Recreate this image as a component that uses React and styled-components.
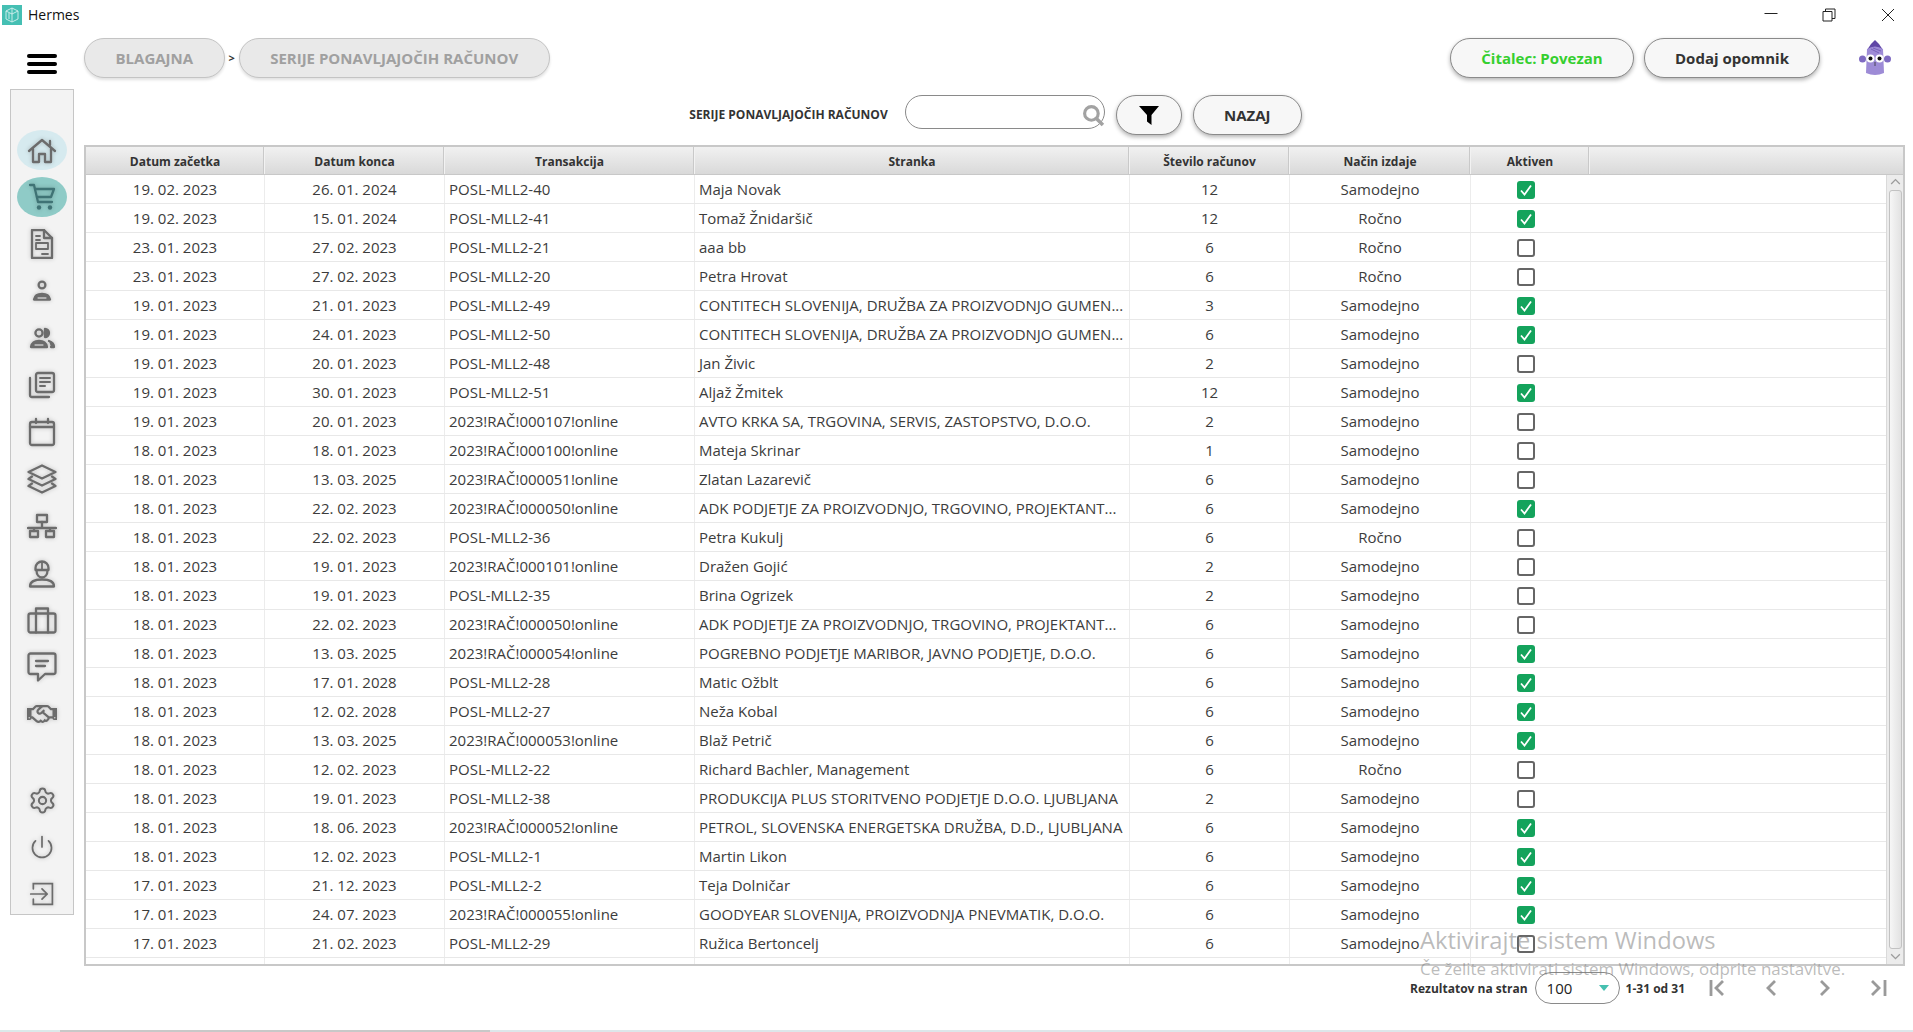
import React from "react";
import styled, { createGlobalStyle } from "styled-components";
import { FaRegHandshake } from "react-icons/fa";
import { Settings } from "lucide-react";

const GlobalStyle = createGlobalStyle`
  html, body { margin: 0; padding: 0; background: #fff; overflow: hidden; }
  body { font-family: "Open Sans", "Noto Sans", sans-serif; color: #333; }
`;

const rows = [
  ["19. 02. 2023", "26. 01. 2024", "POSL-MLL2-40", "Maja Novak", 12, "Samodejno", true],
  ["19. 02. 2023", "15. 01. 2024", "POSL-MLL2-41", "Tomaž Žnidaršič", 12, "Ročno", true],
  ["23. 01. 2023", "27. 02. 2023", "POSL-MLL2-21", "aaa bb", 6, "Ročno", false],
  ["23. 01. 2023", "27. 02. 2023", "POSL-MLL2-20", "Petra Hrovat", 6, "Ročno", false],
  ["19. 01. 2023", "21. 01. 2023", "POSL-MLL2-49", "CONTITECH SLOVENIJA, DRUŽBA ZA PROIZVODNJO GUMEN...", 3, "Samodejno", true],
  ["19. 01. 2023", "24. 01. 2023", "POSL-MLL2-50", "CONTITECH SLOVENIJA, DRUŽBA ZA PROIZVODNJO GUMEN...", 6, "Samodejno", true],
  ["19. 01. 2023", "20. 01. 2023", "POSL-MLL2-48", "Jan Živic", 2, "Samodejno", false],
  ["19. 01. 2023", "30. 01. 2023", "POSL-MLL2-51", "Aljaž Žmitek", 12, "Samodejno", true],
  ["19. 01. 2023", "20. 01. 2023", "2023!RAČ!000107!online", "AVTO KRKA SA, TRGOVINA, SERVIS, ZASTOPSTVO, D.O.O.", 2, "Samodejno", false],
  ["18. 01. 2023", "18. 01. 2023", "2023!RAČ!000100!online", "Mateja Skrinar", 1, "Samodejno", false],
  ["18. 01. 2023", "13. 03. 2025", "2023!RAČ!000051!online", "Zlatan Lazarevič", 6, "Samodejno", false],
  ["18. 01. 2023", "22. 02. 2023", "2023!RAČ!000050!online", "ADK PODJETJE ZA PROIZVODNJO, TRGOVINO, PROJEKTANT...", 6, "Samodejno", true],
  ["18. 01. 2023", "22. 02. 2023", "POSL-MLL2-36", "Petra Kukulj", 6, "Ročno", false],
  ["18. 01. 2023", "19. 01. 2023", "2023!RAČ!000101!online", "Dražen Gojić", 2, "Samodejno", false],
  ["18. 01. 2023", "19. 01. 2023", "POSL-MLL2-35", "Brina Ogrizek", 2, "Samodejno", false],
  ["18. 01. 2023", "22. 02. 2023", "2023!RAČ!000050!online", "ADK PODJETJE ZA PROIZVODNJO, TRGOVINO, PROJEKTANT...", 6, "Samodejno", false],
  ["18. 01. 2023", "13. 03. 2025", "2023!RAČ!000054!online", "POGREBNO PODJETJE MARIBOR, JAVNO PODJETJE, D.O.O.", 6, "Samodejno", true],
  ["18. 01. 2023", "17. 01. 2028", "POSL-MLL2-28", "Matic Ožblt", 6, "Samodejno", true],
  ["18. 01. 2023", "12. 02. 2028", "POSL-MLL2-27", "Neža Kobal", 6, "Samodejno", true],
  ["18. 01. 2023", "13. 03. 2025", "2023!RAČ!000053!online", "Blaž Petrič", 6, "Samodejno", true],
  ["18. 01. 2023", "12. 02. 2023", "POSL-MLL2-22", "Richard Bachler, Management", 6, "Ročno", false],
  ["18. 01. 2023", "19. 01. 2023", "POSL-MLL2-38", "PRODUKCIJA PLUS STORITVENO PODJETJE D.O.O. LJUBLJANA", 2, "Samodejno", false],
  ["18. 01. 2023", "18. 06. 2023", "2023!RAČ!000052!online", "PETROL, SLOVENSKA ENERGETSKA DRUŽBA, D.D., LJUBLJANA", 6, "Samodejno", true],
  ["18. 01. 2023", "12. 02. 2023", "POSL-MLL2-1", "Martin Likon", 6, "Samodejno", true],
  ["17. 01. 2023", "21. 12. 2023", "POSL-MLL2-2", "Teja Dolničar", 6, "Samodejno", true],
  ["17. 01. 2023", "24. 07. 2023", "2023!RAČ!000055!online", "GOODYEAR SLOVENIJA, PROIZVODNJA PNEVMATIK, D.O.O.", 6, "Samodejno", true],
  ["17. 01. 2023", "21. 02. 2023", "POSL-MLL2-29", "Ružica Bertoncelj", 6, "Samodejno", false],
  // next row only shows the top of its checkbox above the table edge
  ["", "", "", "", "", "", true],
];

const columns = "179px 180px 250px 435px 160px 181px 119px 1fr";

const Page = styled.div`
  width: 1913px;
  height: 1032px;
  display: flex;
  flex-direction: column;
  position: relative;
  overflow: hidden;
`;

const TitleBar = styled.div`
  height: 29px;
  display: flex;
  align-items: center;
  padding: 0 3px 0 2px;
`;

const AppName = styled.span`
  margin-left: 6px;
  font-size: 14px;
  color: #111;
  flex: 1;
`;

const WinButton = styled.div`
  width: 45px;
  margin-left: 13.5px;
  display: flex;
  justify-content: center;
`;

const Header = styled.div`
  height: 60px;
  box-sizing: border-box;
  display: flex;
  align-items: flex-start;
  padding: 9px 22px 0 27px;
`;

const Burger = styled.div`
  width: 30px;
  margin-top: 16px;
  margin-right: 27px;
  display: flex;
  flex-direction: column;
  gap: 4px;
`;

const BurgerBar = styled.span`
  height: 4px;
  background: #000;
  border-radius: 2px;
`;

const Crumb = styled.div`
  height: 40px;
  box-sizing: border-box;
  padding: 0 30.5px;
  display: flex;
  align-items: center;
  border-radius: 20px;
  border: 1.5px solid #c4c4c4;
  background: #e9e9e9;
  box-shadow: 0 2px 3px rgba(0, 0, 0, 0.12);
  color: #a0a0a0;
  font-size: 15px;
  font-weight: 700;
`;

const CrumbArrow = styled.span`
  width: 14px;
  height: 40px;
  line-height: 40px;
  text-align: center;
  font-size: 11px;
  font-weight: 700;
  color: #333;
`;

const HeaderRight = styled.div`
  margin-left: auto;
  display: flex;
  align-items: flex-start;
  gap: 10px;
`;

const PillButton = styled.button`
  height: 40px;
  box-sizing: border-box;
  width: ${(p) => p.$width}px;
  padding: 0;
  border-radius: 20px;
  border: 1.5px solid #8a8a8a;
  background: #f7f7f7;
  box-shadow: 0 2px 4px rgba(0, 0, 0, 0.3);
  color: ${(p) => p.$color || "#333"};
  font-family: inherit;
  font-size: 15px;
  font-weight: 700;
  display: flex;
  align-items: center;
  justify-content: center;
`;

const Avatar = styled.div`
  margin-left: 29px;
  margin-top: 2px;
  height: 36px;
`;

const Main = styled.div`
  flex: 1;
  display: flex;
  align-items: flex-start;
  padding-left: 10px;
`;

const Sidebar = styled.nav`
  width: 64px;
  height: 826px;
  box-sizing: border-box;
  padding-top: 40px;
  border: 1px solid #c6c6c6;
  background: #f3f3f3;
  display: flex;
  flex-direction: column;
  align-items: center;
`;

const NavGroup = styled.div`
  display: flex;
  flex-direction: column;
  gap: 7px;
  margin-top: ${(p) => (p.$bottom ? "auto" : "0")};
`;

const NavItem = styled.div`
  width: 50px;
  height: 40px;
  border-radius: 50%;
  display: flex;
  align-items: center;
  justify-content: center;
  background: ${(p) => (p.$state === "active" ? "#8fcbc7" : p.$state === "home" ? "#d6eaef" : "transparent")};
  color: ${(p) => (p.$state === "active" ? "#3f7375" : "#6c6c6c")};
  svg {
    filter: drop-shadow(0 0 2px rgba(0, 0, 0, 0.22));
  }
`;

const Content = styled.div`
  margin-left: 10px;
  width: 1821px;
  display: flex;
  flex-direction: column;
  padding-top: 6px;
`;

const Toolbar = styled.div`
  height: 40px;
  padding-left: 2px;
  display: flex;
  justify-content: center;
  align-items: flex-start;
  gap: 11px;
  margin-bottom: 10px;
`;

const ToolbarLabel = styled.span`
  line-height: 40px;
  margin-right: 6px;
  font-size: 12px;
  font-weight: 700;
  color: #333;
`;

const SearchBox = styled.div`
  position: relative;
  width: 200px;
  height: 34px;
`;

const SearchInput = styled.input`
  width: 100%;
  height: 100%;
  box-sizing: border-box;
  border-radius: 17px;
  border: 1px solid #8a8a8a;
  background: #fff;
  outline: none;
`;

const SearchIcon = styled.svg`
  position: absolute;
  right: 0;
  top: 9px;
`;

const Table = styled.div`
  height: 821px;
  box-sizing: border-box;
  border: 2px solid #c8c8c8;
  display: flex;
  flex-direction: column;
`;

const HeadRow = styled.div`
  height: 28px;
  flex: none;
  box-sizing: border-box;
  display: grid;
  grid-template-columns: ${columns};
  background: linear-gradient(#f1f1f1, #d9d9d9);
  border-bottom: 1px solid #c8c8c8;
`;

const HeadCell = styled.div`
  padding-top: 2px;
  border-right: 1px solid #f2f2f2;
  box-shadow: inset -1px 0 0 #c9c9c9;
  display: flex;
  align-items: center;
  justify-content: center;
  font-size: 12px;
  font-weight: 700;
  color: #333;
  &:last-child {
    border: 0;
    box-shadow: none;
  }
`;

const TableBody = styled.div`
  flex: 1;
  min-height: 0;
  display: flex;
  position: relative;
`;

const RowList = styled.div`
  flex: 1;
  overflow: hidden;
`;

const Row = styled.div`
  height: 29px;
  box-sizing: border-box;
  display: grid;
  grid-template-columns: ${columns};
  border-bottom: 1px solid #e8e8e8;
`;

const Cell = styled.div`
  display: flex;
  align-items: center;
  justify-content: ${(p) => (p.$left ? "flex-start" : "center")};
  padding-left: ${(p) => (p.$left ? "4px" : "0")};
  border-right: ${(p) => (p.$plain ? "0" : "1px solid #ececec")};
  font-size: 15px;
  color: #3c3c3c;
  white-space: nowrap;
  overflow: hidden;
`;

const CheckCell = styled(Cell)`
  padding-right: 9px;
  padding-top: 1px;
`;

const Check = styled.span`
  width: 18px;
  height: 18px;
  box-sizing: border-box;
  border-radius: 3px;
  display: flex;
  align-items: center;
  justify-content: center;
  background: ${(p) => (p.$on ? "#14a35c" : "#fff")};
  border: ${(p) => (p.$on ? "0" : "2.5px solid #666")};
`;

const Scrollbar = styled.div`
  width: 16px;
  flex: none;
  background: #ececec;
  border-left: 1px solid #dadada;
  display: flex;
  flex-direction: column;
  align-items: center;
`;

const ScrollArrow = styled.div`
  height: 15px;
  flex: none;
  display: flex;
  align-items: center;
  justify-content: center;
`;

const ScrollThumb = styled.div`
  flex: 1;
  width: 13px;
  box-sizing: border-box;
  border: 1px solid #c2c2c2;
  border-radius: 3px;
  background: linear-gradient(90deg, #f6f6f6, #e2e2e2);
`;

const Pager = styled.div`
  height: 32px;
  margin-top: 6px;
  display: flex;
  align-items: center;
  justify-content: flex-end;
`;

const PagerText = styled.span`
  font-size: 12px;
  font-weight: 700;
  color: #333;
`;

const PageSize = styled.div`
  width: 85px;
  height: 32px;
  box-sizing: border-box;
  margin: 0 6px 0 7px;
  padding: 0 10px 0 11px;
  border: 1px solid #8a8a8a;
  border-radius: 16px;
  display: flex;
  align-items: center;
  justify-content: space-between;
  font-size: 15px;
  color: #222;
`;

const Caret = styled.span`
  width: 0;
  height: 0;
  border-left: 5px solid transparent;
  border-right: 5px solid transparent;
  border-top: 6px solid #46c0b0;
`;

const PageButton = styled.div`
  width: 54px;
  display: flex;
  justify-content: center;
`;

const PageButtons = styled.div`
  margin-left: 4px;
  display: flex;
`;

const Watermark = styled.div`
  position: absolute;
  left: 1420px;
  top: 924px;
  pointer-events: none;
  color: rgba(120, 120, 120, 0.5);
  white-space: nowrap;
`;

const WatermarkTitle = styled.div`
  font-size: 23.7px;
  line-height: 32px;
`;

const WatermarkText = styled.div`
  font-size: 16.9px;
  line-height: 26px;
`;

const BottomEdge = styled.div`
  position: absolute;
  left: 0;
  right: 0;
  bottom: 0;
  height: 2px;
  display: flex;
`;

const EdgePart = styled.span`
  flex: ${(p) => (p.$wide ? "1" : "none")};
  width: ${(p) => p.$width || 0}px;
  background: ${(p) => p.$color};
`;

// all nav drawings share the same 30 unit box
const Ico = ({ children, w = 30, h = 30 }) => (
  <svg width={w} height={h} viewBox="0 0 30 30" fill="none" stroke="currentColor" strokeWidth="2.3" strokeLinejoin="round" strokeLinecap="round">
    {children}
  </svg>
);

const HomeIcon = () => (
  <Ico>
    <path d="M2 16 L15 5 L28 16" />
    <path d="M6 14 V27 H12 V19 H18 V27 H24 V14" />
    <path d="M23 10 V6" />
  </Ico>
);
const CartIcon = () => (
  <Ico>
    <path d="M3 3 H7 L11 20 H25" />
    <path d="M8 7 H27 L24 15 H10" />
    <circle cx="12" cy="25.5" r="2.2" fill="currentColor" stroke="none" />
    <circle cx="23" cy="25.5" r="2.2" fill="currentColor" stroke="none" />
  </Ico>
);
const DocIcon = () => (
  <Ico>
    <path d="M5 1 H17 L25 9 V29 H5 Z" />
    <path d="M17 1 V9 H25" />
    <path d="M9 7 H13 M9 11 H13" strokeWidth="1.8" />
    <rect x="9" y="14" width="12" height="6" strokeWidth="1.8" />
    <path d="M15 25 H21" strokeWidth="1.8" />
  </Ico>
);
const PersonIcon = () => (
  <Ico>
    <circle cx="15" cy="9" r="3.4" />
    <path d="M7 23.5 C8 19 11 18 15 18 S22 19 23 23.5 Z" fill="currentColor" />
    <path d="M11 22 H19" stroke="#f3f3f3" strokeWidth="1" />
  </Ico>
);
const PeopleIcon = () => (
  <Ico>
    <circle cx="12" cy="10" r="3.6" />
    <path d="M4 24 C5 19 8 18 12 18 S19 19 20 24 Z" fill="currentColor" />
    <path d="M8 22 H16" stroke="#f3f3f3" strokeWidth="1" />
    <path d="M18 6 A4 4 0 0 1 18 14 Z" fill="currentColor" />
    <path d="M22 18 C25 19 27 21 27 24 H24" fill="currentColor" />
  </Ico>
);
const NewsIcon = () => (
  <Ico>
    <rect x="9" y="3" width="18" height="19" rx="2" />
    <path d="M13 8 H23 M13 12 H23 M13 16 H18" strokeWidth="2" />
    <path d="M3 8 V25 A2 2 0 0 0 5 27 H22" />
  </Ico>
);
const CalendarIcon = () => (
  <Ico>
    <rect x="3" y="5" width="24" height="23" rx="2" />
    <path d="M3 10 H27" />
    <path d="M9 2 V6 M21 2 V6" />
  </Ico>
);
const LayersIcon = () => (
  <Ico>
    <path d="M15 1.5 L28.5 8 L15 14.5 L1.5 8 Z" />
    <path d="M5 12.5 L1.5 15 L15 21.5 L28.5 15 L25 12.5" />
    <path d="M5 19.5 L1.5 22 L15 28.5 L28.5 22 L25 19.5" />
  </Ico>
);
const NetworkIcon = () => (
  <Ico>
    <rect x="10" y="4" width="10" height="7" />
    <path d="M15 11 V17 M1 17 H29 M7 17 V20 M23 17 V20" />
    <rect x="3" y="20" width="8" height="6" />
    <rect x="19" y="20" width="8" height="6" />
  </Ico>
);
const WorkerIcon = () => (
  <Ico>
    <path d="M8.5 10 A6.5 6.5 0 0 1 21.5 10 V12 H8.5 Z" />
    <path d="M15 4 V12" strokeWidth="1.8" />
    <path d="M9.5 12 C9.5 17 12 19.5 15 19.5 S20.5 17 20.5 12" />
    <path d="M3 28.5 C3 23.5 8 21.5 15 21.5 S27 23.5 27 28.5 Z" />
  </Ico>
);
const CaseIcon = () => (
  <Ico>
    <rect x="1.5" y="8.5" width="27" height="19" rx="2" />
    <path d="M9 8.5 V3.5 H21 V8.5 M9 8.5 V27.5 M21 8.5 V27.5" />
  </Ico>
);
const ChatIcon = () => (
  <Ico>
    <path d="M3.5 1.5 H26.5 A2 2 0 0 1 28.5 3.5 V20 A2 2 0 0 1 26.5 22 H18 L11 28.5 V22 H3.5 A2 2 0 0 1 1.5 20 V3.5 A2 2 0 0 1 3.5 1.5 Z" />
    <path d="M9 9 H21 M9 14 H18" />
  </Ico>
);
const PowerIcon = () => (
  <Ico w={26} h={26}>
    <path d="M15 3 V15" strokeWidth="2" />
    <path d="M7.5 8 A11 11 0 1 0 22.5 8" strokeWidth="2" />
  </Ico>
);
const ExitIcon = () => (
  <Ico w={26} h={26}>
    <path d="M5 9 V3 H27 V27 H5 V21" strokeWidth="2" strokeLinejoin="miter" />
    <path d="M2 15 H21 M15 9 L21 15 L15 21" strokeWidth="2" />
  </Ico>
);

const navTop = [
  [<HomeIcon />, "home"],
  [<CartIcon />, "active"],
  [<DocIcon />],
  [<PersonIcon />],
  [<PeopleIcon />],
  [<NewsIcon />],
  [<CalendarIcon />],
  [<LayersIcon />],
  [<NetworkIcon />],
  [<WorkerIcon />],
  [<CaseIcon />],
  [<ChatIcon />],
  [<FaRegHandshake size={30} />],
];

const navBottom = [<Settings size={29} strokeWidth={1.7} />, <PowerIcon />, <ExitIcon />];

const Logo = () => (
  <svg width="20" height="20" viewBox="0 0 20 20">
    <rect width="20" height="20" fill="#45bfb3" />
    <path d="M10 3 L16 6 V14 L10 17 L4 14 V6 Z M10 3 V17 M4 6 L10 9 L16 6 M7 8 V14" fill="none" stroke="#d5f1ee" strokeWidth="0.9" />
  </svg>
);

const Creature = () => (
  <svg width="32" height="36" viewBox="0 0 32 36">
    <path d="M16 0 L20 4 L24 10 L8 10 L12 4 Z" fill="#5f46a6" />
    <circle cx="3.5" cy="19" r="3.5" fill="#7f6bc2" />
    <circle cx="28.5" cy="19" r="3.5" fill="#7f6bc2" />
    <path d="M8 9 Q16 4 24 9 L25 33 Q16 37 7 33 Z" fill="#9d8bd6" />
    <path d="M12 9 L20 13 M14 8 L22 11" stroke="#6e58b4" strokeWidth="0.8" />
    <circle cx="11.5" cy="18.5" r="4" fill="#fff" />
    <circle cx="20.5" cy="18.5" r="4" fill="#fff" />
    <circle cx="11.5" cy="18.5" r="2" fill="#111" />
    <circle cx="20.5" cy="18.5" r="2" fill="#111" />
    <path d="M16 22 V26" stroke="#333" strokeWidth="0.8" />
  </svg>
);

const WinIcon = ({ children }) => (
  <svg width="14" height="14" viewBox="0 0 14 14" fill="none" stroke="#222" strokeWidth="1">
    {children}
  </svg>
);

const Chevron = ({ d, stroke = "#9a9a9a", w = 18, h = 18, sw = 2.8 }) => (
  <svg width={w} height={h} viewBox="0 0 18 18" fill="none" stroke={stroke} strokeWidth={sw}>
    <path d={d} />
  </svg>
);

const App = () => {
  return (
    <Page>
      <GlobalStyle />
      <TitleBar>
        <Logo />
        <AppName>Hermes</AppName>
        <WinButton>
          <WinIcon>
            <path d="M0.5 5.5 H13.5" />
          </WinIcon>
        </WinButton>
        <WinButton>
          <WinIcon>
            <path d="M1 3.5 H10 V13 H1 Z M3.5 3.5 V1 H13 V10.5 H10" />
          </WinIcon>
        </WinButton>
        <WinButton>
          <WinIcon>
            <path d="M1 1 L13 13 M13 1 L1 13" />
          </WinIcon>
        </WinButton>
      </TitleBar>

      <Header>
        <Burger>
          <BurgerBar />
          <BurgerBar />
          <BurgerBar />
        </Burger>
        <Crumb>BLAGAJNA</Crumb>
        <CrumbArrow>&gt;</CrumbArrow>
        <Crumb>SERIJE PONAVLJAJOČIH RAČUNOV</Crumb>
        <HeaderRight>
          <PillButton $width={184} $color="#35cf2f">Čitalec: Povezan</PillButton>
          <PillButton $width={176}>Dodaj opomnik</PillButton>
          <Avatar>
            <Creature />
          </Avatar>
        </HeaderRight>
      </Header>

      <Main>
        <Sidebar>
          <NavGroup>
            {navTop.map(([icon, state], i) => (
              <NavItem key={i} $state={state}>
                {icon}
              </NavItem>
            ))}
          </NavGroup>
          <NavGroup $bottom>
            {navBottom.map((icon, i) => (
              <NavItem key={i}>{icon}</NavItem>
            ))}
          </NavGroup>
        </Sidebar>

        <Content>
          <Toolbar>
            <ToolbarLabel>SERIJE PONAVLJAJOČIH RAČUNOV</ToolbarLabel>
            <SearchBox>
              <SearchInput />
              <SearchIcon width="23" height="23" viewBox="0 0 22 22" fill="none" stroke="#a2a2a2">
                <circle cx="9" cy="9" r="6.5" strokeWidth="3" />
                <path d="M14 14 L20 20" strokeWidth="3.4" />
              </SearchIcon>
            </SearchBox>
            <PillButton $width={66}>
              <svg width="20" height="20" viewBox="0 0 20 20" fill="#000">
                <path d="M0 1 H20 L12.5 10 V20 L8 16.5 V10 Z" />
              </svg>
            </PillButton>
            <PillButton $width={109}>NAZAJ</PillButton>
          </Toolbar>

          <Table>
            <HeadRow>
              <HeadCell>Datum začetka</HeadCell>
              <HeadCell>Datum konca</HeadCell>
              <HeadCell>Transakcija</HeadCell>
              <HeadCell>Stranka</HeadCell>
              <HeadCell>Število računov</HeadCell>
              <HeadCell>Način izdaje</HeadCell>
              <HeadCell>Aktiven</HeadCell>
              <HeadCell />
            </HeadRow>
            <TableBody>
              <RowList>
                {rows.map((r, i) => (
                  <Row key={i}>
                    <Cell>{r[0]}</Cell>
                    <Cell>{r[1]}</Cell>
                    <Cell $left>{r[2]}</Cell>
                    <Cell $left>{r[3]}</Cell>
                    <Cell>{r[4]}</Cell>
                    <Cell>{r[5]}</Cell>
                    <CheckCell $plain>
                      <Check $on={r[6]}>
                        {r[6] && (
                          <svg width="14" height="14" viewBox="0 0 14 14" fill="none" stroke="#fff" strokeWidth="1.8">
                            <path d="M2 7.5 L5.5 11.5 L12 2.5" />
                          </svg>
                        )}
                      </Check>
                    </CheckCell>
                    <Cell $plain />
                  </Row>
                ))}
              </RowList>
              <Scrollbar>
                <ScrollArrow>
                  <Chevron d="M3 11 L9 5 L15 11" stroke="#9c9c9c" w={13} h={13} sw={1.8} />
                </ScrollArrow>
                <ScrollThumb />
                <ScrollArrow>
                  <Chevron d="M3 6 L9 12 L15 6" stroke="#9c9c9c" w={13} h={13} sw={1.8} />
                </ScrollArrow>
              </Scrollbar>
            </TableBody>
          </Table>

          <Pager>
            <PagerText>Rezultatov na stran</PagerText>
            <PageSize>
              100
              <Caret />
            </PageSize>
            <PagerText>1-31 od 31</PagerText>
            <PageButtons>
              <PageButton>
                <Chevron d="M4 1 V17 M16 2 L9 9 L16 16" />
              </PageButton>
              <PageButton>
                <Chevron d="M14 2 L7 9 L14 16" />
              </PageButton>
              <PageButton>
                <Chevron d="M6 2 L13 9 L6 16" />
              </PageButton>
              <PageButton>
                <Chevron d="M3 2 L10 9 L3 16 M16 1 V17" />
              </PageButton>
            </PageButtons>
          </Pager>
        </Content>
      </Main>

      <BottomEdge>
        <EdgePart $width={60} $color="#dbe9ea" />
        <EdgePart $width={430} $color="#c8c8c8" />
        <EdgePart $wide $color="#dde6ea" />
      </BottomEdge>

      <Watermark>
        <WatermarkTitle>Aktivirajte sistem Windows</WatermarkTitle>
        <WatermarkText>Če želite aktivirati sistem Windows, odprite nastavitve.</WatermarkText>
      </Watermark>
    </Page>
  );
};

export default App;
